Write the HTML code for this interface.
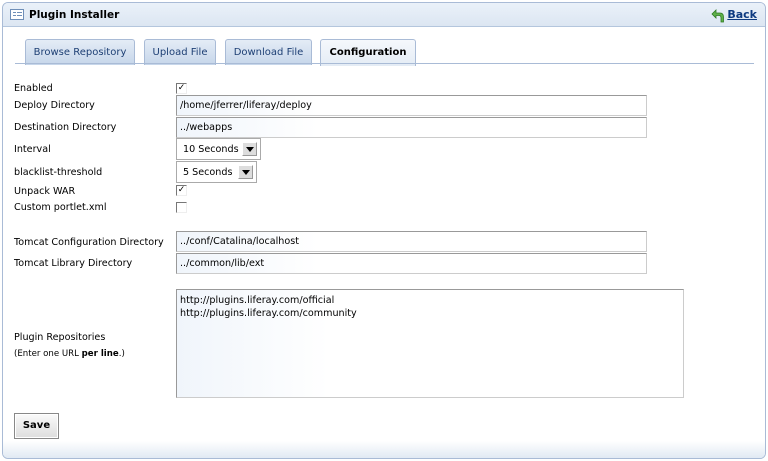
<!DOCTYPE html>
<html><head><style>
*{box-sizing:border-box;margin:0;padding:0}
body{width:768px;height:461px;background:#fff;font-family:"DejaVu Sans",sans-serif;font-size:10px;color:#000;position:relative;overflow:hidden}
.frame{position:absolute;left:2px;top:2px;width:764px;height:457px;border:1px solid #a9bbd6;border-radius:6px;background:#fff;overflow:hidden}
.title{position:absolute;left:0;top:0;right:0;height:24px;background:linear-gradient(#eaf1f9,#dce6f2);border-bottom:1px solid #b4c6dd}
.title b{position:absolute;left:26px;top:6px;font-size:10.5px}
.ticon{position:absolute;left:7px;top:6px;width:14px;height:11px;border:1px solid #6f8fb8;background:#fff}
.ticon:before{content:"";position:absolute;left:2px;top:2px;width:3px;height:1px;background:#6f8fb8;box-shadow:0 3px #6f8fb8,6px 0 #6f8fb8,6px 3px #6f8fb8,4px 0 #6f8fb8,4px 3px #6f8fb8}
.back{position:absolute;right:8px;top:5px;font-weight:bold;font-size:11px;color:#0d3a80;text-decoration:underline}
.tab{position:absolute;top:36px;height:26px;border:1px solid #a9bbd6;border-bottom:none;border-radius:3px 3px 0 0;background:linear-gradient(#e4ecf6,#c6d6ea);color:#1d3f74;font-size:10px;text-align:center;line-height:25px}
.tab.act{background:linear-gradient(#f5f8fc,#e4ecf5);color:#000;font-weight:bold;height:27px}
.tline{position:absolute;left:12px;top:60px;width:739px;height:1px;background:#a9bbd6}
.l{position:absolute;left:11px;font-size:9.6px}
.cb{position:absolute;left:173px;width:11px;height:11px;border-left:1px solid #777;border-top:1px solid #777;border-right:1px solid #eee;border-bottom:1px solid #eee;font-size:9px;line-height:9px;text-align:center}
.in{position:absolute;left:173px;width:471px;height:21px;border:1px solid #999;border-right-color:#ccc;border-bottom-color:#ccc;background:linear-gradient(90deg,#f0f5fb,#fff 30%);padding:4px 3px;font-size:9.6px}
.sel{position:absolute;left:173px;height:22px;border:1px solid #aaa;background:#fff;padding:5px 6px;font-size:9.6px}
.sel i{position:absolute;right:3px;top:3px;width:15px;height:14px;background:#ddd;border:1px solid #999;border-top-color:#fff;border-left-color:#fff}
.sel i:after{content:"";position:absolute;left:3px;top:4px;border:4px solid transparent;border-top:5px solid #000}
</style></head><body>
<div class="frame">
<div class="title"><div class="ticon"></div><b>Plugin Installer</b>
<svg style="position:absolute;right:40px;top:5px" width="14" height="15" viewBox="0 0 14 15"><path d="M5 2 L1 6 L5 10 L5 7.5 L8 7.5 Q10 7.5 10 10 L10 14 L12.5 14 L12.5 9 Q12.5 5 9 5 L5 5 Z" fill="#5fb04a" stroke="#2e7a22" stroke-width="0.8"/></svg>
<span class="back">Back</span></div>
<div class="tab" style="left:22px;width:110px">Browse Repository</div>
<div class="tab" style="left:141px;width:72px">Upload File</div>
<div class="tab" style="left:222px;width:87px">Download File</div>
<div class="tab act" style="left:317px;width:96px">Configuration</div>
<div class="tline"></div>
<div class="l" style="top:80px">Enabled</div><div class="cb" style="top:80px">✓</div>
<div class="l" style="top:97px">Deploy Directory</div><div class="in" style="top:92px">/home/jferrer/liferay/deploy</div>
<div class="l" style="top:119px">Destination Directory</div><div class="in" style="top:114px">../webapps</div>
<div class="l" style="top:141px">Interval</div><div class="sel" style="top:135px;width:85px">10 Seconds<i></i></div>
<div class="l" style="top:164px">blacklist-threshold</div><div class="sel" style="top:158px;width:81px">5 Seconds<i></i></div>
<div class="l" style="top:183px">Unpack WAR</div><div class="cb" style="top:182px">✓</div>
<div class="l" style="top:199px">Custom portlet.xml</div><div class="cb" style="top:199px"></div>
<div class="l" style="top:234px">Tomcat Configuration Directory</div><div class="in" style="top:228px">../conf/Catalina/localhost</div>
<div class="l" style="top:255px">Tomcat Library Directory</div><div class="in" style="top:250px">../common/lib/ext</div>
<div class="l" style="top:327px;line-height:16px">Plugin Repositories<br><span style="font-size:8.6px">(Enter one URL <b>per line</b>.)</span></div>
<div class="in" style="top:286px;width:508px;height:109px;padding:4px 3px;line-height:13px">http://plugins.liferay.com/official<br>http://plugins.liferay.com/community</div>
<div style="position:absolute;left:11px;top:410px;width:45px;height:26px;border:1px solid #888;background:linear-gradient(#fafafa,#ddd);box-shadow:inset 0 0 0 1px #fff;font-weight:bold;font-size:10px;text-align:center;line-height:24px">Save</div>
<div style="position:absolute;left:0;right:0;top:438px;height:19px;background:linear-gradient(#fff,#dde7f2)"></div>
</div>
</body></html>
